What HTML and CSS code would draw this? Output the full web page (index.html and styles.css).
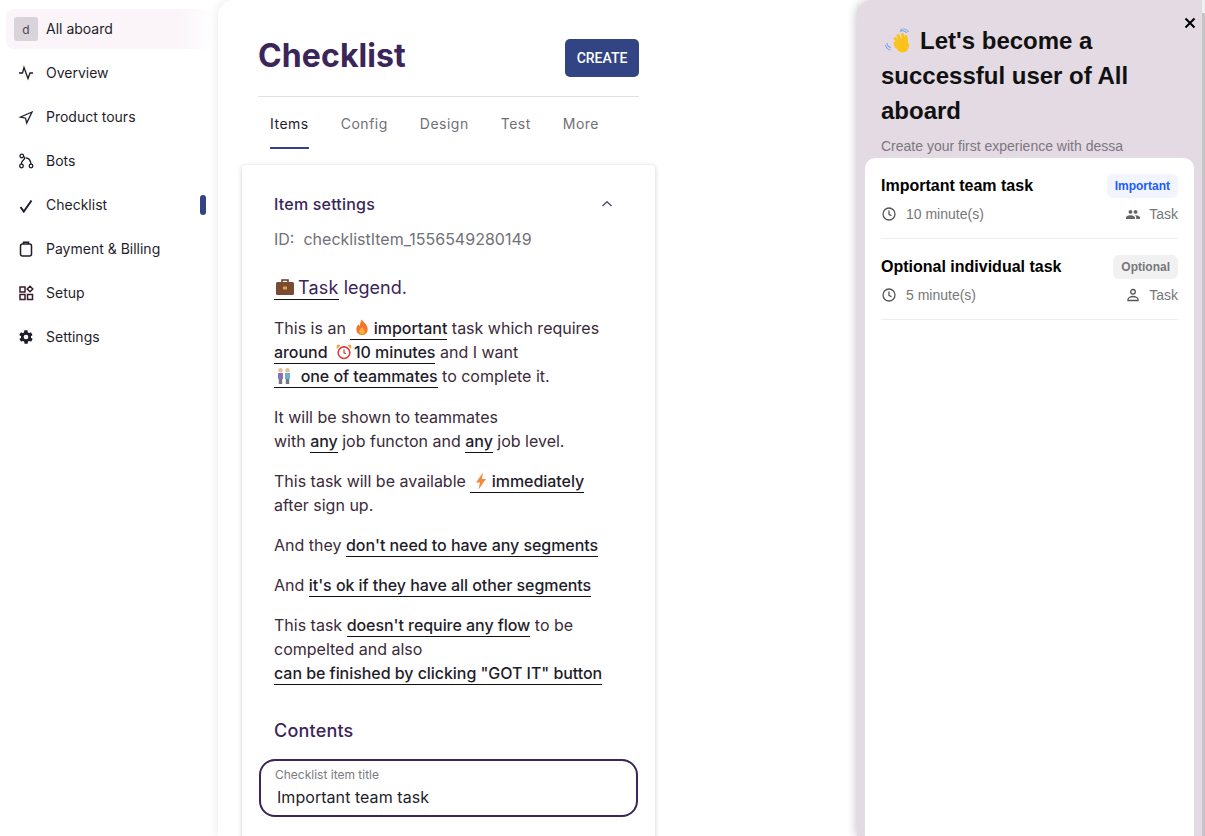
FILE: index.html
```html
<!DOCTYPE html>
<html lang="en">
<head>
    <meta charset="UTF-8">
    <title>Checklist</title>
    <link rel="stylesheet" href="styles.css">
</head>
<body>
    <aside class="sidebar">
        <a class="org">
            <span class="org-avatar">d</span>
            <span class="org-name">All aboard</span>
        </a>
        <a class="side-item">
            <svg class="side-icon" viewBox="0 0 16 16"><path d="M1 8h3.500l1.500-5.500 4 11L12 8h3"/></svg>
            Overview
        </a>
        <a class="side-item">
            <svg class="side-icon" viewBox="0 0 16 16"><path d="M14 3 2.500 8l5 1.200L8.700 14z"/></svg>
            Product tours
        </a>
        <a class="side-item">
            <svg class="side-icon" viewBox="0 0 16 16"><circle cx="3.800" cy="3" r="1.800"/><circle cx="3.500" cy="13" r="1.800"/><circle cx="13" cy="13" r="1.800"/><path d="M5.500 3.500c3 1 .5 3-1 4.500-1 1-1 2-1 3.200M8 5c3 0 4.500 2 5 6.200"/></svg>
            Bots
        </a>
        <a class="side-item active">
            <svg class="side-icon check" viewBox="0 0 16 16"><path d="M2.500 10 5.800 14.500 13.500 3.500"/></svg>
            Checklist
            <span class="active-mark"></span>
        </a>
        <a class="side-item">
            <svg class="side-icon clipboard" viewBox="0 0 16 16"><rect x="2.500" y="3" width="11" height="12" rx="2"/><path d="M5.500 3V1.200h5V3"/></svg>
            Payment &amp; Billing
        </a>
        <a class="side-item">
            <svg class="side-icon setup" viewBox="0 0 16 16"><rect x="2" y="2" width="5" height="5"/><rect x="2" y="9.500" width="5" height="5"/><rect x="9.500" y="9.500" width="5" height="5"/><path d="m12 1.200 2.800 2.800-2.800 2.800L9.200 4z"/></svg>
            Setup
        </a>
        <a class="side-item">
            <svg class="side-icon gear" viewBox="0 0 24 24"><path d="M19.400 13a7.500 7.500 0 0 0 0-2l2.100-1.600a.5.5 0 0 0 .1-.6l-2-3.500a.5.5 0 0 0-.6-.2l-2.500 1a7.300 7.300 0 0 0-1.700-1l-.4-2.600a.5.5 0 0 0-.5-.5h-4a.5.5 0 0 0-.5.400l-.4 2.700a7.300 7.300 0 0 0-1.700 1l-2.500-1a.5.5 0 0 0-.6.200l-2 3.500a.5.5 0 0 0 .1.600L4.600 11a7.500 7.500 0 0 0 0 2l-2.100 1.600a.5.5 0 0 0-.1.600l2 3.500c.1.200.4.300.6.200l2.500-1c.5.400 1.100.7 1.700 1l.4 2.600c0 .3.200.5.500.5h4c.3 0 .5-.2.500-.4l.4-2.700c.6-.3 1.200-.6 1.700-1l2.500 1c.2.100.5 0 .6-.2l2-3.500a.5.5 0 0 0-.1-.6zM12 15.500a3.500 3.500 0 1 1 0-7 3.500 3.500 0 0 1 0 7z"/></svg>
            Settings
        </a>
    </aside>

    <main class="main">
        <div class="main-col">
            <div class="page-head">
                <h1>Checklist</h1>
                <button class="create-btn">CREATE</button>
            </div>
            <nav class="tabs">
                <a class="tab selected">Items</a>
                <a class="tab">Config</a>
                <a class="tab">Design</a>
                <a class="tab">Test</a>
                <a class="tab">More</a>
            </nav>
        </div>

        <section class="card">
            <div class="card-head">
                <h2>Item settings</h2>
                <svg class="chevron" viewBox="0 0 12 8"><path d="M1.500 6 6 1.800 10.500 6"/></svg>
            </div>
            <p class="item-id">ID:&nbsp; checklistItem_1556549280149</p>

            <p class="legend"><b class="pick"><svg class="emoji case" viewBox="0 0 20 20"><path class="case-handle" d="M7 5V3h6v2"/><rect class="case-body" x="1" y="5" width="18" height="13" rx="1.500"/><rect class="case-clasp" x="8" y="9.500" width="4" height="3"/></svg>Task</b> legend.</p>

            <p class="rule-first">This is an <b class="pick">&nbsp;<svg class="emoji fire" viewBox="1 0 14 18"><path class="fire-out" d="M8 .5c1 3 6 5 6 10.500a6 6 0 0 1-12 0c0-2.500 1-4 2.300-5.500.2 1 .6 1.700 1.200 2.200C5.800 5 6.500 2.500 8 .5z"/><path class="fire-in" d="M8 8.500c.6 1.500 3 2.200 3 4.500a3 3 0 0 1-6 0c0-2.300 2.400-3 3-4.500z"/></svg> important</b> task which requires<br>
            <b class="pick">around &nbsp;<svg class="emoji alarm" viewBox="0 0 16 16"><circle class="clock-face" cx="8" cy="8.700" r="5.800"/><path class="clock-hands" d="M8 5.500v3.300l2 1"/><path class="clock-bell" d="M.8 5 4.500 1.300 2 .6.600 2zM15.200 5 11.500 1.300 14 .6 15.400 2z"/></svg>10 minutes</b> and I want<br>
            <b class="pick">&nbsp;<svg class="emoji team" viewBox="0 0 16 16"><circle class="skin" cx="4.500" cy="2.300" r="2.200"/><circle class="skin" cx="11.500" cy="2.300" r="2.200"/><rect class="shirt-a" x="2" y="5" width="5" height="6"/><rect class="shirt-b" x="9" y="5" width="5" height="6"/><rect class="legs" x="2.800" y="11" width="3.400" height="5"/><rect class="legs" x="9.800" y="11" width="3.400" height="5"/></svg> &nbsp;one of teammates</b> to complete it.</p>

            <p>It will be shown to teammates<br>
            with <b class="pick">any</b> job functon and <b class="pick">any</b> job level.</p>

            <p>This task will be available <b class="pick">&nbsp;<svg class="emoji bolt" viewBox="0 0 12 18"><path d="M8 .5 1 10.500h4L3.500 17.500 11 7H6.800z"/></svg> immediately</b><br>
            after sign up.</p>

            <p>And they <b class="pick">don't need to have any segments</b></p>

            <p>And <b class="pick">it's ok if they have all other segments</b></p>

            <p>This task <b class="pick">doesn't require any flow</b> to be<br>
            compelted and also<br>
            <b class="pick">can be finished by clicking "GOT IT" button</b></p>

            <h2 class="contents">Contents</h2>

            <div class="field">
                <label>Checklist item title</label>
                <div class="field-value">Important team task</div>
            </div>
        </section>
    </main>

    <aside class="panel">
        <svg class="close" viewBox="0 0 12 12"><path d="M1.500 1.500l9 9M10.500 1.500l-9 9"/></svg>
        <div class="panel-head">
            <h2><svg class="wave" viewBox="0 0 26 26"><g class="wave-hand"><circle cx="17.500" cy="18" r="6.500"/><path d="M16 17l-6-6.500M17 15l-4-7.500M19 14l-1.500-7.500M21.500 15l-.5-6.500M11.500 19l-1.500-4"/></g><path class="wave-lines" d="M15 3.500c2-1.500 5-1 6.500 1.500M15.500 1.500c3-1.200 6.500-.5 8 2.500M2 15c0 2 1.500 4 4 4.500M.5 17c.5 2.500 2.500 4.500 5 4.800"/></svg>Let's become a successful user of All aboard</h2>
            <p>Create your first experience with dessa</p>
        </div>
        <div class="task-list">
            <div class="task">
                <div class="task-row">
                    <span class="task-title">Important team task</span>
                    <span class="badge badge-blue">Important</span>
                </div>
                <div class="task-row task-meta">
                    <span class="meta-left">
                        <svg class="clock" viewBox="0 0 14 14"><circle cx="7" cy="7" r="6"/><path d="M7 3.500V7.300l2.500 1.500"/></svg>
                        10 minute(s)
                    </span>
                    <span class="meta-right">
                        <svg class="people" viewBox="1 4 22 16"><path d="M16 11c1.700 0 3-1.300 3-3s-1.300-3-3-3-3 1.300-3 3 1.300 3 3 3zm-8 0c1.700 0 3-1.300 3-3S9.700 5 8 5 5 6.300 5 8s1.300 3 3 3zm0 2c-2.300 0-7 1.200-7 3.500V19h14v-2.500C15 14.200 10.300 13 8 13zm8 0h-1c1.200.8 2 2 2 3.500V19h6v-2.500c0-2.300-4.700-3.500-7-3.500z"/></svg>
                        Task
                    </span>
                </div>
            </div>
            <div class="task">
                <div class="task-row">
                    <span class="task-title">Optional individual task</span>
                    <span class="badge badge-grey">Optional</span>
                </div>
                <div class="task-row task-meta">
                    <span class="meta-left">
                        <svg class="clock" viewBox="0 0 14 14"><circle cx="7" cy="7" r="6"/><path d="M7 3.500V7.300l2.500 1.500"/></svg>
                        5 minute(s)
                    </span>
                    <span class="meta-right">
                        <svg class="person" viewBox="0 0 14 14"><circle cx="7" cy="3.800" r="2.300"/><path d="M2 12.500v-1.200c0-1.800 3-2.800 5-2.800s5 1 5 2.800v1.200z"/></svg>
                        Task
                    </span>
                </div>
            </div>
        </div>
    </aside>
    <div class="scrollbar"></div>
</body>
</html>
```

FILE: styles.css
```css
* {
    box-sizing: border-box;
}
html, body {
    height: 100%;
}
body {
    font-family: Inter, "Noto Sans", sans-serif;
    background-color: #fff;
    color: #1f1d2b;
    margin: 0;
    height: 836px;
    overflow: hidden;
    display: flex;
}
p, h1, h2 {
    margin: 0;
}

/* sidebar */
.sidebar {
    width: 218px;
    flex-shrink: 0;
    padding: 9px 12px 0 6px;
    font-size: 14px;
}
.org {
    display: flex;
    align-items: center;
    gap: 8px;
    height: 40px;
    width: 206px;
    padding-left: 8px;
    border-radius: 8px;
    background: linear-gradient(90deg, #fbf5fa 85%, #fff);
    margin-bottom: 2px;
}
.org-avatar {
    width: 24px;
    height: 24px;
    border-radius: 3px;
    background: #d9d3da;
    color: #4b4759;
    font-size: 12px;
    display: flex;
    align-items: center;
    justify-content: center;
}
.org-name {
    margin-top: -2px;
}
.side-item {
    display: flex;
    align-items: center;
    gap: 12px;
    height: 44px;
    padding-left: 12px;
    padding-bottom: 2px;
    position: relative;
}
.side-icon {
    width: 16px;
    height: 16px;
    fill: none;
    stroke: #1f1d2b;
    stroke-width: 1.300;
    flex-shrink: 0;
    margin-top: 2px;
}
.side-icon.check {
    stroke-width: 2;
}
.side-icon.clipboard {
    stroke-width: 1.500;
}
.side-icon.setup {
    stroke: #3a1d2b;
    stroke-width: 1.500;
}
.side-icon.gear {
    fill: #1f1d2b;
    stroke: none;
}
.active-mark {
    position: absolute;
    left: 194px;
    top: 12px;
    width: 6px;
    height: 20px;
    border-radius: 3px;
    background: #324484;
}

/* main column */
.main {
    width: 639px;
    flex-shrink: 0;
    border-radius: 16px 0 0 0;
    box-shadow: -2px 0 8px rgba(0, 0, 0, 0.07);
    padding-left: 24px;
}
.main-col {
    width: 381px;
    margin-left: 16px;
}
.page-head {
    display: flex;
    justify-content: space-between;
    align-items: center;
    height: 97px;
    padding-top: 19px;
    border-bottom: 1px solid #e2e2e4;
}
.page-head h1 {
    font-size: 32px;
    font-weight: 700;
    letter-spacing: 0.1px;
    color: #3c2559;
    margin-top: -5px;
}
.create-btn {
    font-family: Roboto, sans-serif;
    font-size: 14px;
    font-weight: 500;
    color: #fff;
    background: #324484;
    border: none;
    border-radius: 5px;
    width: 74px;
    height: 38px;
    margin-top: 1px;
}
.tabs {
    display: flex;
    gap: 32px;
    padding-left: 12px;
    height: 52px;
}
.tab {
    font-size: 14px;
    font-weight: 400;
    letter-spacing: 0.5px;
    color: #717077;
    padding-top: 18px;
}
.tab.selected {
    color: #1f1d2b;
    border-bottom: 2px solid #324484;
}
.card {
    width: 413px;
    height: 700px;
    margin-top: 16px;
    padding: 27px 32px 0;
    border-radius: 4px;
    background: #fff;
    box-shadow: 0 1px 5px rgba(0, 0, 0, 0.2);
    font-size: 16px;
    line-height: 24px;
    color: #3b2a3a;
}
.card p {
    margin-bottom: 16px;
}
.card-head {
    display: flex;
    justify-content: space-between;
    align-items: center;
    padding-right: 10px;
    height: 24px;
}
.card-head h2 {
    font-size: 16px;
    font-weight: 450;
    letter-spacing: 0.2px;
    color: #3c2559;
}
.chevron {
    width: 12px;
    height: 8px;
    fill: none;
    stroke: #5c4a78;
    stroke-width: 1.500;
}
.card .item-id {
    margin-top: 11px;
    color: #717077;
    font-size: 16px;
    margin-bottom: 25px;
}
.card .legend {
    font-size: 18px;
    color: #3c2559;
    margin-bottom: 16px;
}
.card .rule-first {
    margin-bottom: 17px;
}
.pick {
    font-weight: 500;
    letter-spacing: -0.05px;
    color: #1f1d2b;
    border-bottom: 1px solid #111;
    padding-bottom: 1px;
}
.legend .pick {
    font-weight: 400;
    color: #3c2559;
    letter-spacing: 0.2px;
}
.emoji {
    width: 16px;
    height: 16px;
    vertical-align: -2px;
}
.case {
    width: 20px;
    height: 20px;
    margin: 0 3px 0 1px;
    vertical-align: -3px;
}
.case-handle {
    fill: none;
    stroke: #5a3a28;
    stroke-width: 1.500;
}
.case-body {
    fill: #7a4a33;
}
.case-clasp {
    fill: #d9a441;
}
.fire {
    height: 17px;
    width: 14px;
    margin-right: 1px;
}
.fire-out {
    fill: #f4752b;
}
.fire-in {
    fill: #fbb03b;
}
.alarm {
    margin-right: 2px;
}
.clock-face {
    fill: #fff;
    stroke: #dd3a3a;
    stroke-width: 1.600;
}
.clock-hands {
    fill: none;
    stroke: #c23a3a;
    stroke-width: 1.200;
}
.clock-bell {
    fill: #e8a33d;
}
.team {
    margin-left: -2px;
}
.skin {
    fill: #e8c08f;
}
.shirt-a {
    fill: #8b6fc0;
}
.shirt-b {
    fill: #6fb0d8;
}
.legs {
    fill: #77777f;
}
.bolt {
    fill: #f58a3c;
    width: 12px;
    height: 18px;
    vertical-align: -3px;
    margin-right: 1px;
}
.contents {
    font-size: 18px;
    font-weight: 450;
    letter-spacing: 0.2px;
    color: #3c2559;
    margin-top: 34px;
    line-height: 24px;
}
.field {
    margin: 16px -15px 0 -15px;
    height: 58px;
    border: 2px solid #3c2559;
    border-radius: 16px;
    padding: 6px 14px 0;
}
.field label {
    display: block;
    font-size: 12px;
    line-height: 16px;
    color: #7b7a80;
}
.field-value {
    font-size: 16px;
    line-height: 20px;
    color: #1f1d2b;
    letter-spacing: 0.05px;
    margin: 4px 0 0 2px;
}

/* right panel */
.panel {
    width: 345px;
    flex-shrink: 0;
    background: #e3dae3;
    border-radius: 16px 0 0 0;
    box-shadow: -2px 0 8px rgba(0, 0, 0, 0.2);
    position: relative;
    display: flex;
    flex-direction: column;
    padding: 0 8px;
    font-family: "Liberation Sans", Arial, sans-serif;
}
.close {
    position: absolute;
    top: 17px;
    right: 6px;
    width: 12px;
    height: 12px;
    fill: none;
    stroke: #000;
    stroke-width: 2;
}
.panel-head {
    padding: 23px 16px 0;
    height: 158px;
}
.panel-head h2 {
    font-size: 24px;
    font-weight: 700;
    line-height: 35px;
    color: #111;
}
.panel-head p {
    margin-top: 8px;
    font-size: 14px;
    line-height: 20px;
    color: #7d7780;
}
.wave {
    width: 26px;
    height: 26px;
    vertical-align: -5px;
    margin: 0 9px 0 4px;
}
.wave-hand {
    fill: #fcc21b;
    stroke: #fcc21b;
    stroke-width: 3;
    stroke-linecap: round;
}
.wave-hand circle {
    stroke: none;
}
.wave-lines {
    fill: none;
    stroke: #7ea3ee;
    stroke-width: 1.100;
}
.task-list {
    flex: 1;
    background: #fff;
    border-radius: 10px 10px 0 0;
    padding: 0 16px;
}
.task {
    height: 81px;
    padding-top: 16px;
    border-bottom: 1px solid #eeeeef;
}
.task-row {
    display: flex;
    justify-content: space-between;
    align-items: center;
}
.task-title {
    font-size: 16px;
    font-weight: 700;
    color: #000;
}
.badge {
    font-size: 12px;
    font-weight: 700;
    line-height: 24px;
    height: 24px;
    padding: 0 8px;
    border-radius: 6px;
}
.badge-blue {
    color: #1a5cff;
    background: #f2f5ff;
}
.badge-grey {
    color: #77777a;
    background: #f1f1f2;
}
.task-meta {
    margin-top: 6px;
    font-size: 14px;
    line-height: 20px;
    color: #77777a;
}
.meta-left, .meta-right {
    display: flex;
    align-items: center;
}
.meta-left {
    gap: 10px;
}
.meta-right {
    gap: 9px;
}
.clock {
    width: 14px;
    height: 14px;
    margin-left: 1px;
    fill: none;
    stroke: #555;
    stroke-width: 1.300;
}
.people {
    width: 14px;
    height: 11px;
    fill: #666;
}
.person {
    width: 14px;
    height: 14px;
    fill: none;
    stroke: #555;
    stroke-width: 1.300;
}

/* page scrollbar */
.scrollbar {
    width: 3px;
    flex-shrink: 0;
    background: #c6c6c6;
    border-top: 13px solid #f1f1f1;
    position: relative;
}
```
